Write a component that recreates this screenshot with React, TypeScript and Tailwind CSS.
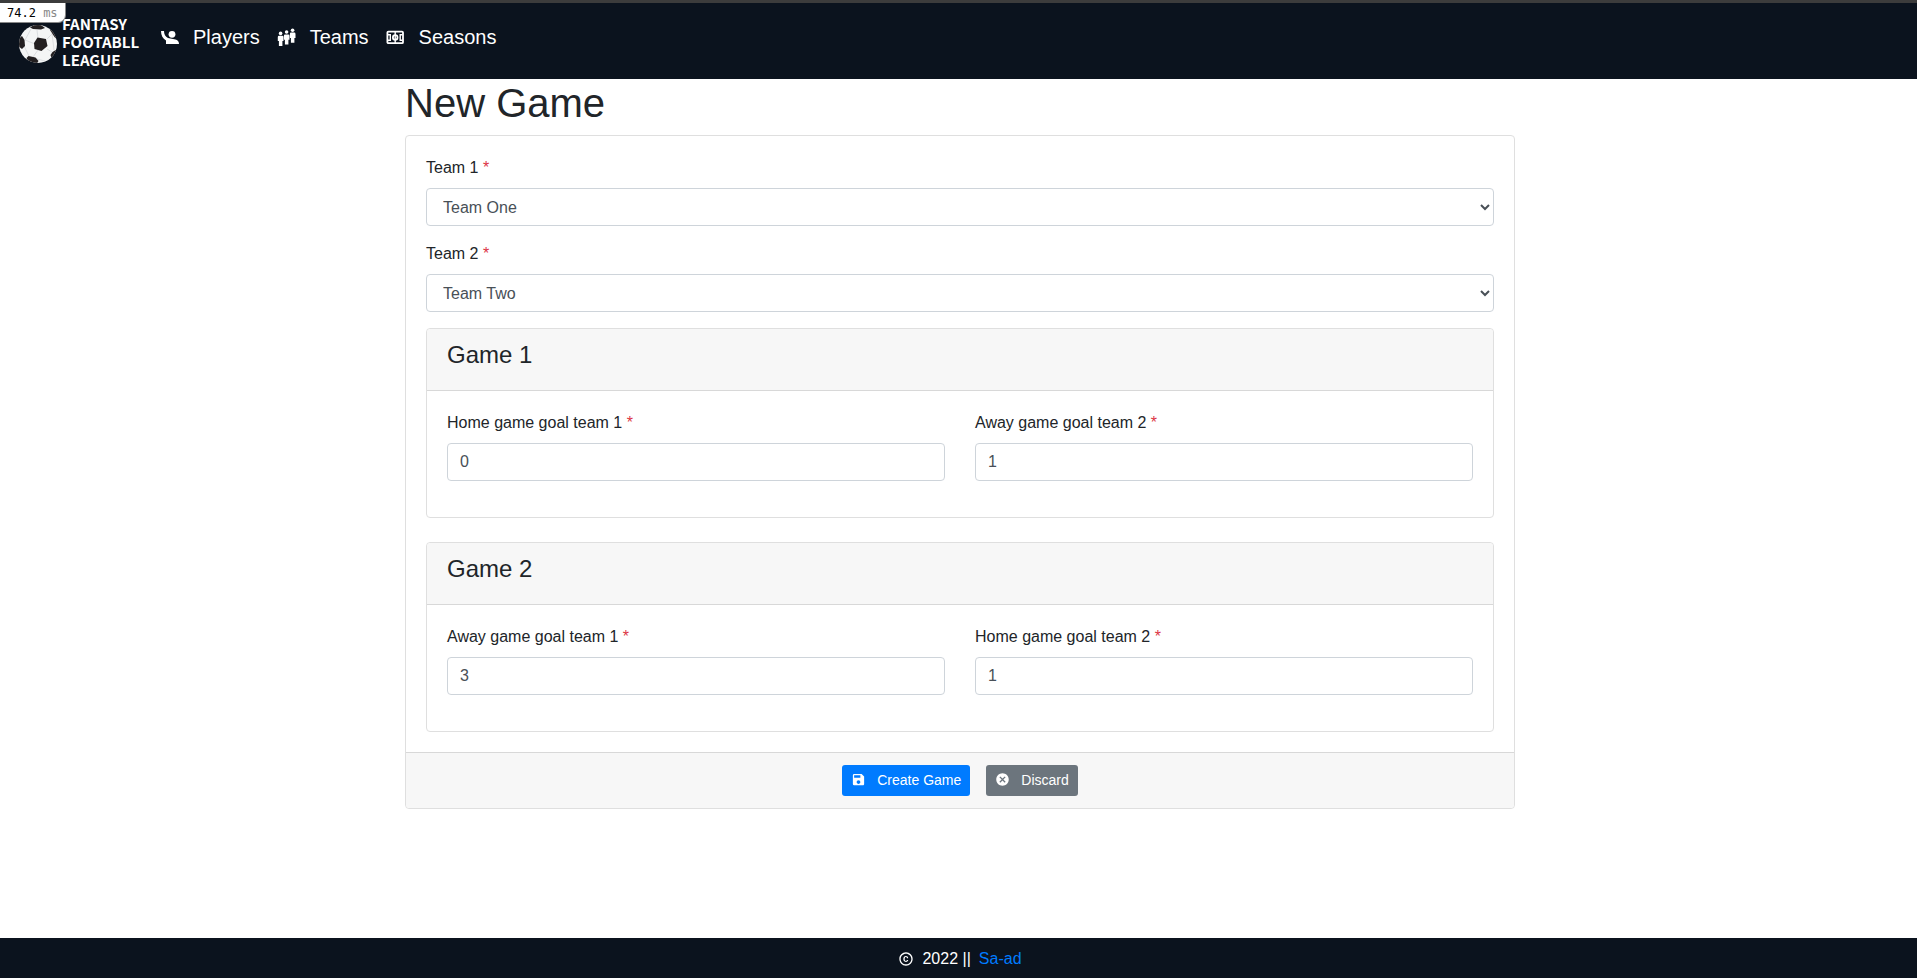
import type { ReactNode } from "react";
import { MdCancel, MdCopyright, MdSave } from "react-icons/md";

function BallLogo() {
  return (
    <svg viewBox="0 0 40 40" className="mt-1 size-10 shrink-0" aria-hidden="true">
      <defs>
        <clipPath id="ball">
          <circle cx="20" cy="20" r="19" />
        </clipPath>
      </defs>
      <circle cx="20" cy="20" r="19" fill="#f4f5f5" />
      <g clipPath="url(#ball)">
        <g fill="none" stroke="#d5d8da" strokeWidth="0.8">
          <path d="M17 20 7 16M20 26l-5 7M29 25l5 3M29 15l5-5M20 14l-1-8M7 16l6-11M6 22l5 10M15 34l12 3M36 26 34 9" />
        </g>
        <g fill="#231f20">
          <path d="M19.500 13.500 28 15l1.500 7-6 5-7-2-.5-6z" />
          <path d="M12 3.500 16 1h7l4 3-4 1.500-8-.5z" />
          <path d="M0 15l4-3 2.500 4 .5 6-3 3-4-3z" />
          <path d="M8.500 34l2-2 7 1.500 3 3.500-2 3h-7z" />
          <path d="M32.500 31l2-3 5-3v6l-5 6z" />
          <path d="M32 6l3 0 5 7v3l-3.500-3z" />
        </g>
      </g>
    </svg>
  );
}

function PlayerIcon() {
  return (
    <svg viewBox="0 0 20 20" className="size-5" fill="currentColor" aria-hidden="true">
      <circle cx="12" cy="7.300" r="3.400" />
      <path d="M1 4h3c0 3.200 1.300 5.500 4 7l7.500 1.500c2 .5 3.500 1.800 3.500 4.500H6v-3.500C2.800 11.500 1 8.500 1 4z" />
    </svg>
  );
}

function TeamIcon() {
  return (
    <svg viewBox="0 0 20 20" className="size-5" fill="currentColor" aria-hidden="true">
      <circle cx="3.600" cy="6.400" r="1.800" />
      <path d="M2 8.800h3.200q1.300 0 1.300 1.300V14H5.400v4.900H1.900V14H.8v-3.900q0-1.300 1.200-1.300z" />
      <circle cx="9.600" cy="5" r="1.800" />
      <path d="M8 7.400h3.200q1.300 0 1.300 1.300v4h-1.100v4.800H7.900v-4.800H6.900v-4q0-1.300 1.100-1.300z" />
      <circle cx="15.600" cy="3.200" r="1.800" />
      <path d="M14 5.600h3.200q1.300 0 1.300 1.300v4h-1.100v4.800h-3.500v-4.800h-1v-4q0-1.300 1.100-1.300z" />
    </svg>
  );
}

function PitchIcon() {
  return (
    <svg viewBox="0 0 20 20" className="size-5" fill="none" stroke="currentColor" strokeWidth="1.800" aria-hidden="true">
      <rect x="1.400" y="4.600" width="15.600" height="11.600" rx="1" />
      <path d="M9.200 4.500v12M2 7.800h2.300v5.400H2M16.500 7.800h-2.300v5.400h2.300" strokeWidth="1.400" />
      <circle cx="9.200" cy="10.500" r="2.300" />
    </svg>
  );
}

function NavLink({ icon, children }: { icon: ReactNode; children: ReactNode }) {
  return (
    <a href="#" className="flex items-center gap-[13px] text-xl leading-[30px] text-white">
      {icon}
      {children}
    </a>
  );
}

function FieldLabel({ id, children }: { id: string; children: ReactNode }) {
  return (
    <label htmlFor={id} className="mb-2 block">
      {children} <span className="text-[#dc3545]">*</span>
    </label>
  );
}

function TeamSelect({ id, label, value }: { id: string; label: string; value: string }) {
  return (
    <div className="mb-4">
      <FieldLabel id={id}>{label}</FieldLabel>
      <select
        id={id}
        defaultValue={value}
        className="block h-[38px] w-full rounded border border-[#ced4da] bg-white px-3 py-1.5 text-[#495057]"
      >
        <option>Team One</option>
        <option>Team Two</option>
      </select>
    </div>
  );
}

function GoalInput({ id, label, value }: { id: string; label: string; value: string }) {
  return (
    <div className="mb-4">
      <FieldLabel id={id}>{label}</FieldLabel>
      <input
        id={id}
        type="number"
        defaultValue={value}
        className="block h-[38px] w-full rounded border border-[#ced4da] bg-white px-3 py-1.5 text-[#495057]"
      />
    </div>
  );
}

function GameCard({ title, children }: { title: string; children: ReactNode }) {
  return (
    <section className="rounded border border-[#dfdfdf] bg-white">
      <header className="rounded-t border-b border-[#d8d8d8] bg-[#f7f7f7] px-5 pt-3 pb-5">
        <h4 className="h-[29px] text-2xl leading-[27px]">{title}</h4>
      </header>
      <div className="grid grid-cols-2 gap-[30px] p-5">{children}</div>
    </section>
  );
}

export default function App() {
  return (
    <div className="relative flex min-h-screen flex-col bg-white font-['Liberation_Sans',Arial,sans-serif] text-base text-[#212529]">
      <div className="absolute top-[3px] left-0 rounded-br-lg border-r border-b border-[#888] bg-white pt-px pr-[7px] pl-[7px] font-['DejaVu_Sans_Mono',monospace] text-xs leading-[18px] text-black">
        74.2 <span className="text-[#888]">ms</span>
      </div>
      <nav className="flex h-[79px] items-start border-t-[3px] border-[#3c3c3c] bg-[#0b131e] px-[18px] text-white">
        <a href="#" className="mr-[26px] flex items-center pt-3">
          <BallLogo />
          <span className="ml-1 w-[72px] font-['Noto_Sans_CJK_SC',sans-serif] text-[15px] leading-[18px] font-bold">
            <span className="block">FANTASY</span>
            <span className="block">FOOTABLL</span>
            <span className="block">LEAGUE</span>
          </span>
        </a>
        <div className="flex gap-[17px] pt-[19px]">
          <NavLink icon={<PlayerIcon />}>Players</NavLink>
          <NavLink icon={<TeamIcon />}>Teams</NavLink>
          <NavLink icon={<PitchIcon />}>Seasons</NavLink>
        </div>
      </nav>

      <main className="flex-1 pl-[3px]">
        <div className="mx-auto max-w-[1110px]">
          <h1 className="mb-2 text-[40px] leading-[48px]">New Game</h1>
          <form className="rounded border border-[#dfdfdf]" onSubmit={(e) => e.preventDefault()}>
            <div className="p-5">
              <TeamSelect id="team1" label="Team 1" value="Team One" />
              <TeamSelect id="team2" label="Team 2" value="Team Two" />
              <div className="flex flex-col gap-6">
                <GameCard title="Game 1">
                  <GoalInput id="home1" label="Home game goal team 1" value="0" />
                  <GoalInput id="away2" label="Away game goal team 2" value="1" />
                </GameCard>
                <GameCard title="Game 2">
                  <GoalInput id="away1" label="Away game goal team 1" value="3" />
                  <GoalInput id="home2" label="Home game goal team 2" value="1" />
                </GameCard>
              </div>
            </div>
            <div className="flex justify-center gap-4 rounded-b border-t border-[#d8d8d8] bg-[#f7f7f7] py-3">
              <button type="submit" className="flex h-[31px] items-center rounded-[3px] bg-[#007bff] px-[9px] pb-0.5 text-sm text-white">
                <MdSave className="mr-[11px] size-[15px]" />
                Create Game
              </button>
              <button type="button" className="flex h-[31px] items-center rounded-[3px] bg-[#6c757d] px-[9px] pb-0.5 text-sm text-white">
                <MdCancel className="mr-[11px] size-[15px]" />
                Discard
              </button>
            </div>
          </form>
        </div>
      </main>

      <footer className="flex h-10 items-center justify-center bg-[#0b131e] pt-0.5 pl-[3px] text-white">
        <MdCopyright className="mr-2 size-4" />
        <span>2022 ||</span>
        <a href="#" className="ml-2 text-[#007bff]">
          Sa-ad
        </a>
      </footer>
    </div>
  );
}
